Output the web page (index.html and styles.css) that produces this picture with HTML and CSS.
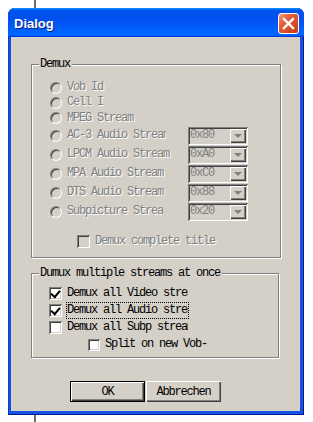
FILE: index.html
```html
<!DOCTYPE html>
<html lang="de">
<head>
  <meta charset="UTF-8">
  <meta name="viewport" content="width=device-width, initial-scale=1.0">
  <title>Dialog</title>
  <link rel="stylesheet" href="styles.css">
</head>
<body>
  <div class="stem stem-top"></div>

  <div class="dialog">
    <div class="titlebar">
      <span class="title">Dialog</span>
      <span class="close">
        <svg width="19" height="19" viewBox="0 0 19 19">
          <path d="M5 5 L14 14 M14 5 L5 14" stroke="#fff" stroke-width="2.4" stroke-linecap="square"/>
        </svg>
      </span>
    </div>

    <div class="client">
      <!-- Demux (alles deaktiviert) -->
      <div class="group group-demux">
        <span class="legend">Demux</span>

        <div class="row row-s1"><span class="radio"></span><span class="label disabled">Vob Id</span></div>
        <div class="row row-s1"><span class="radio"></span><span class="label disabled">Cell I</span></div>
        <div class="row row-s2"><span class="radio"></span><span class="label disabled">MPEG Stream</span></div>

        <div class="row row-combo">
          <span class="radio"></span><span class="label disabled clip-ac3">AC-3 Audio Stream</span>
          <span class="combo"><span class="combo-value">0x80</span><span class="combo-btn"></span></span>
        </div>
        <div class="row row-combo">
          <span class="radio"></span><span class="label disabled">LPCM Audio Stream</span>
          <span class="combo"><span class="combo-value">0xA0</span><span class="combo-btn"></span></span>
        </div>
        <div class="row row-combo">
          <span class="radio"></span><span class="label disabled">MPA Audio Stream</span>
          <span class="combo"><span class="combo-value">0xC0</span><span class="combo-btn"></span></span>
        </div>
        <div class="row row-combo">
          <span class="radio"></span><span class="label disabled">DTS Audio Stream</span>
          <span class="combo"><span class="combo-value">0x88</span><span class="combo-btn"></span></span>
        </div>
        <div class="row row-combo">
          <span class="radio"></span><span class="label disabled clip-sub">Subpicture Stream</span>
          <span class="combo"><span class="combo-value">0x20</span><span class="combo-btn"></span></span>
        </div>

        <div class="row row-check row-complete">
          <span class="check check-disabled"></span><span class="disabled">Demux complete title</span>
        </div>
      </div>

      <!-- mehrere Streams -->
      <div class="group group-multi">
        <span class="legend">Dumux multiple streams at once</span>

        <div class="row row-check"><span class="check checked"></span><span class="label">Demux all Video streams</span></div>
        <div class="row row-check"><span class="check checked"></span><span class="label focus">Demux all Audio streams</span></div>
        <div class="row row-check"><span class="check"></span><span class="label">Demux all Subp streams</span></div>
        <div class="row row-check row-split"><span class="check"></span><span>Split on new Vob-</span></div>
      </div>

      <div class="buttons">
        <button class="btn btn-default">OK</button>
        <button class="btn">Abbrechen</button>
      </div>
    </div>
  </div>

  <div class="stem stem-bottom"></div>
</body>
</html>
```

FILE: styles.css
```css
* {
  box-sizing: border-box;
}

body {
  margin: 0;
  width: 313px;
  height: 422px;
  overflow: hidden;
  background-color: #fff;
  font-family: "Liberation Mono", "Courier New", monospace;
  font-size: 12px;
  letter-spacing: -1.2px;
  line-height: 15px;
  color: #000;
}

.stem {
  width: 2px;
  margin-left: 34px;
  background-color: #6c6c6c;
}

.stem-top {
  height: 8px;
}

.stem-bottom {
  height: 7px;
}

/* Fensterrahmen */
.dialog {
  margin-left: 8px;
  width: 296px;
  height: 407px;
  padding: 0 4px 4px 3px;
  border-radius: 7px 7px 0 0;
  overflow: hidden;
  background-color: #1452e4;
  box-shadow: inset 0 -1px 0 #00188a, inset -1px 0 0 #00188a, inset 1px 0 0 #0a3cc8;
}

.titlebar {
  height: 29px;
  margin: 0 -4px 0 -3px;
  padding: 0 5px 0 6px;
  display: flex;
  align-items: center;
  justify-content: space-between;
  background: linear-gradient(180deg, #0997ff 0%, #0053ee 8%, #0050ee 40%, #0066ff 88%, #0066ff 93%, #005bff 95%, #003dd7 96%, #003dd7 100%);
}

.title {
  font-family: "Liberation Sans", Arial, sans-serif;
  font-weight: bold;
  font-size: 13px;
  letter-spacing: 0;
  color: #fff;
  text-shadow: 1px 1px 0 #0a1f8a;
  margin-top: 1px;
}

.close {
  width: 21px;
  height: 21px;
  margin-top: 2px;
  border: 1px solid #fff;
  border-radius: 3px;
  display: flex;
  align-items: center;
  justify-content: center;
  background: linear-gradient(135deg, #f3a58a 0%, #e4633f 30%, #d84c2a 65%, #c43a1a 100%);
}

.client {
  height: 374px;
  padding: 27px 0 0 20px;
  background-color: #d4d0c8;
}

/* Gruppenrahmen, geätzt */
.group {
  position: relative;
  border: 1px solid #808080;
  box-shadow: inset 1px 1px 0 #fff, 1px 1px 0 #fff;
}

.group-demux {
  width: 250px;
  height: 194px;
  padding: 15px 0 0 18px;
}

.group-multi {
  width: 248px;
  height: 85px;
  margin-top: 15px;
  padding: 11px 0 0 17px;
}

.legend {
  position: absolute;
  top: -8px;
  left: 7px;
  padding: 0 2px 0 1px;
  background-color: #d4d0c8;
}

.disabled {
  color: #808080;
  text-shadow: 1px 1px 0 #fff;
}

.row {
  display: flex;
  align-items: center;
}

.row-s1 {
  height: 15px;
}

.row-s2 {
  height: 16px;
}

.row-combo {
  height: 19px;
}

.row-check {
  height: 17px;
}

.row-complete {
  margin-top: 12px;
  padding-left: 27px;
}

.row-split {
  padding-left: 39px;
}

.radio {
  width: 12px;
  height: 12px;
  margin-right: 5px;
  border-radius: 50%;
  border: 1px solid;
  border-color: #808080 #fff #fff #808080;
  background-color: #d4d0c8;
  box-shadow: inset 1px 1px 0 #404040;
  flex-shrink: 0;
}

.label {
  width: 121px;
  overflow: hidden;
  white-space: nowrap;
}

.clip-ac3 {
  width: 99px;
  margin-right: 22px;
}

.clip-sub {
  width: 96px;
  margin-right: 25px;
}

.combo {
  width: 60px;
  height: 18px;
  padding: 2px;
  display: flex;
  align-items: center;
  background-color: #d4d0c8;
  box-shadow: inset 1px 1px 0 #808080, inset -1px -1px 0 #fff, inset 2px 2px 0 #404040, inset -2px -2px 0 #d4d0c8;
}

.combo-value {
  flex: 1;
  color: #808080;
}

.combo-btn {
  width: 16px;
  height: 14px;
  display: flex;
  align-items: center;
  justify-content: center;
  background-color: #d4d0c8;
  box-shadow: inset 1px 1px 0 #fff, inset -1px -1px 0 #404040, inset -2px -2px 0 #808080;
}

.combo-btn::after {
  content: "";
  border-left: 4px solid transparent;
  border-right: 4px solid transparent;
  border-top: 4px solid #808080;
  margin-top: 1px;
}

.check {
  width: 13px;
  height: 13px;
  margin-right: 5px;
  flex-shrink: 0;
  display: flex;
  align-items: center;
  justify-content: center;
  background-color: #fff;
  box-shadow: inset 1px 1px 0 #808080, inset -1px -1px 0 #fff, inset 2px 2px 0 #404040, inset -2px -2px 0 #d4d0c8;
}

.check-disabled {
  background-color: #d4d0c8;
}

.checked::after {
  content: "";
  width: 7px;
  height: 4px;
  border-left: 2px solid #000;
  border-bottom: 2px solid #000;
  transform: rotate(-50deg);
  margin-top: -2px;
}

.row-split .check {
  width: 12px;
  height: 12px;
}

.focus {
  outline: 1px dotted #000;
}

.buttons {
  display: flex;
  gap: 1px;
  margin-top: 23px;
  padding-left: 39px;
}

.btn {
  width: 75px;
  height: 21px;
  padding: 0;
  border: none;
  font-family: inherit;
  font-size: 12px;
  letter-spacing: -1.2px;
  color: #000;
  background-color: #d4d0c8;
  box-shadow: inset 1px 1px 0 #fff, inset -1px -1px 0 #404040, inset -2px -2px 0 #808080;
}

.btn-default {
  border: 1px solid #000;
}
```
